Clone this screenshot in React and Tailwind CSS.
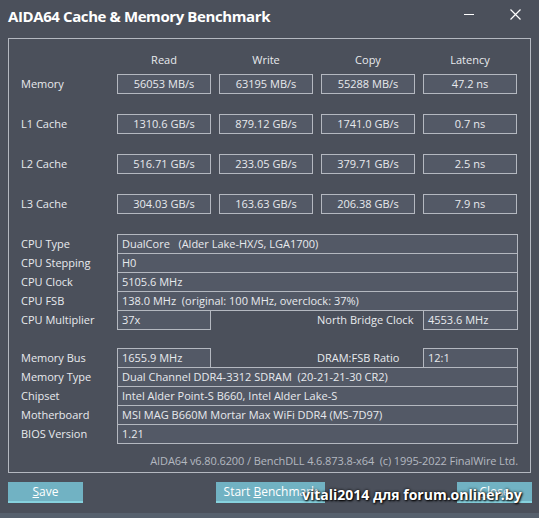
import React from 'react'

const cols = ['Read', 'Write', 'Copy', 'Latency']

const bench = [
  { label: 'Memory', values: ['56053 MB/s', '63195 MB/s', '55288 MB/s', '47.2 ns'] },
  { label: 'L1 Cache', values: ['1310.6 GB/s', '879.12 GB/s', '1741.0 GB/s', '0.7 ns'] },
  { label: 'L2 Cache', values: ['516.71 GB/s', '233.05 GB/s', '379.71 GB/s', '2.5 ns'] },
  { label: 'L3 Cache', values: ['304.03 GB/s', '163.63 GB/s', '206.38 GB/s', '7.9 ns'] },
]

const Box = ({ children, className = '' }) => (
  <div className={`h-[20px] border border-[#b4b8c0] bg-[#535966] flex items-center ${className}`}>
    {children}
  </div>
)

// one line of the info table: label + wide value box
const InfoRow = ({ label, value, first }) => (
  <div className={`flex items-center h-[20px] ${first ? '' : '-mt-px'}`}>
    <div className="w-[108px] pl-[12px]">{label}</div>
    <Box className="w-[401px] pl-[4px]">{value}</Box>
  </div>
)

// row with a short box on the left and a labelled box on the right
const SplitRow = ({ label, value, rightLabel, rightValue, first }) => (
  <div className={`flex items-center h-[20px] ${first ? '' : '-mt-px'}`}>
    <div className="w-[108px] pl-[12px]">{label}</div>
    <Box className="w-[94px] pl-[4px]">{value}</Box>
    <div className="w-[212px] pl-[106px]">{rightLabel}</div>
    <Box className="w-[95px] pl-[4px]">{rightValue}</Box>
  </div>
)

export default function App() {
  return (
    <div
      className="w-[539px] h-[518px] bg-[#4b505b] text-[#e8eaee] text-[11px] flex flex-col overflow-hidden"
      style={{ fontFamily: '"Open Sans", "Noto Sans", sans-serif' }}
    >
      {/* title bar */}
      <div className="h-[38px] flex items-start pl-[8px] pt-[5px]">
        <div className="flex-1 text-[15px] font-bold text-white tracking-[-0.4px]">
          AIDA64 Cache &amp; Memory Benchmark
        </div>
        <div className="w-[10px] h-px bg-white mt-[9px] mr-[36px]"></div>
        <svg width="11" height="11" viewBox="0 0 11 11" className="mt-[4px] mr-[18px]">
          <path d="M0.5 0.5 L10.5 10.5 M10.5 0.5 L0.5 10.5" stroke="#fff" strokeWidth="1.2" />
        </svg>
      </div>

      {/* main panel */}
      <div className="ml-[8px] w-[523px] h-[435px] border border-[#b4b8c0] flex flex-col">
        {/* column headers */}
        <div className="flex h-[35px] items-end pb-[6px] pt-[13px]">
          <div className="w-[108px]"></div>
          <div className="flex gap-[8px]">
            {cols.map((c) => (
              <div key={c} className="w-[94px] text-center">{c}</div>
            ))}
          </div>
        </div>

        <div className="flex flex-col gap-[20px]">
          {bench.map((row) => (
            <div key={row.label} className="flex items-center">
              <div className="w-[108px] pl-[12px]">{row.label}</div>
              <div className="flex gap-[8px]">
                {row.values.map((v, i) => (
                  <Box key={i} className="w-[94px] justify-center">{v}</Box>
                ))}
              </div>
            </div>
          ))}
        </div>

        {/* cpu info */}
        <div className="flex flex-col mt-[20px]">
          <InfoRow first label="CPU Type" value={<span>DualCore&nbsp;&nbsp;&nbsp;(Alder Lake-HX/S, LGA1700)</span>} />
          <InfoRow label="CPU Stepping" value="H0" />
          <InfoRow label="CPU Clock" value="5105.6 MHz" />
          <InfoRow label="CPU FSB" value={<span>138.0 MHz&nbsp;&nbsp;(original: 100 MHz, overclock: 37%)</span>} />
          <SplitRow label="CPU Multiplier" value="37x" rightLabel="North Bridge Clock" rightValue="4553.6 MHz" />
        </div>

        {/* memory info */}
        <div className="flex flex-col mt-[18px]">
          <SplitRow first label="Memory Bus" value="1655.9 MHz" rightLabel="DRAM:FSB Ratio" rightValue="12:1" />
          <InfoRow label="Memory Type" value={<span>Dual Channel DDR4-3312 SDRAM&nbsp;&nbsp;(20-21-21-30 CR2)</span>} />
          <InfoRow label="Chipset" value="Intel Alder Point-S B660, Intel Alder Lake-S" />
          <InfoRow label="Motherboard" value="MSI MAG B660M Mortar Max WiFi DDR4 (MS-7D97)" />
          <InfoRow label="BIOS Version" value="1.21" />
        </div>

        <div className="mt-[9px] pr-[12px] text-right text-[#b4b8c0] tracking-[-0.1px]">
          AIDA64 v6.80.6200 / BenchDLL 4.6.873.8-x64&nbsp;&nbsp;(c) 1995-2022 FinalWire Ltd.
        </div>
      </div>

      {/* buttons */}
      <div className="relative flex items-start mt-[9px] h-[21px] text-[12px] text-white">
        <button className="ml-[8px] w-[75px] h-[21px] bg-[#71b2c3] border-b-2 border-[#86d2de]">
          <span className="underline">S</span>ave
        </button>
        <button className="ml-[133px] w-[109px] h-[21px] bg-[#71b2c3] border-b-2 border-[#86d2de]">
          Start <span className="underline">B</span>enchmark
        </button>
        <button className="ml-[132px] w-[75px] h-[21px] bg-[#71b2c3] border-b-2 border-[#86d2de]">
          <span className="underline">C</span>lose
        </button>
        <div
          className="absolute left-[302px] top-[2px] text-[14px] font-bold text-white whitespace-nowrap"
          style={{ textShadow: '0 0 3px #000, 1px 1px 2px #000' }}
        >
          vitali2014 для forum.onliner.by
        </div>
      </div>

      <div className="mt-auto h-[5px] bg-[#56606d]"></div>
    </div>
  )
}
